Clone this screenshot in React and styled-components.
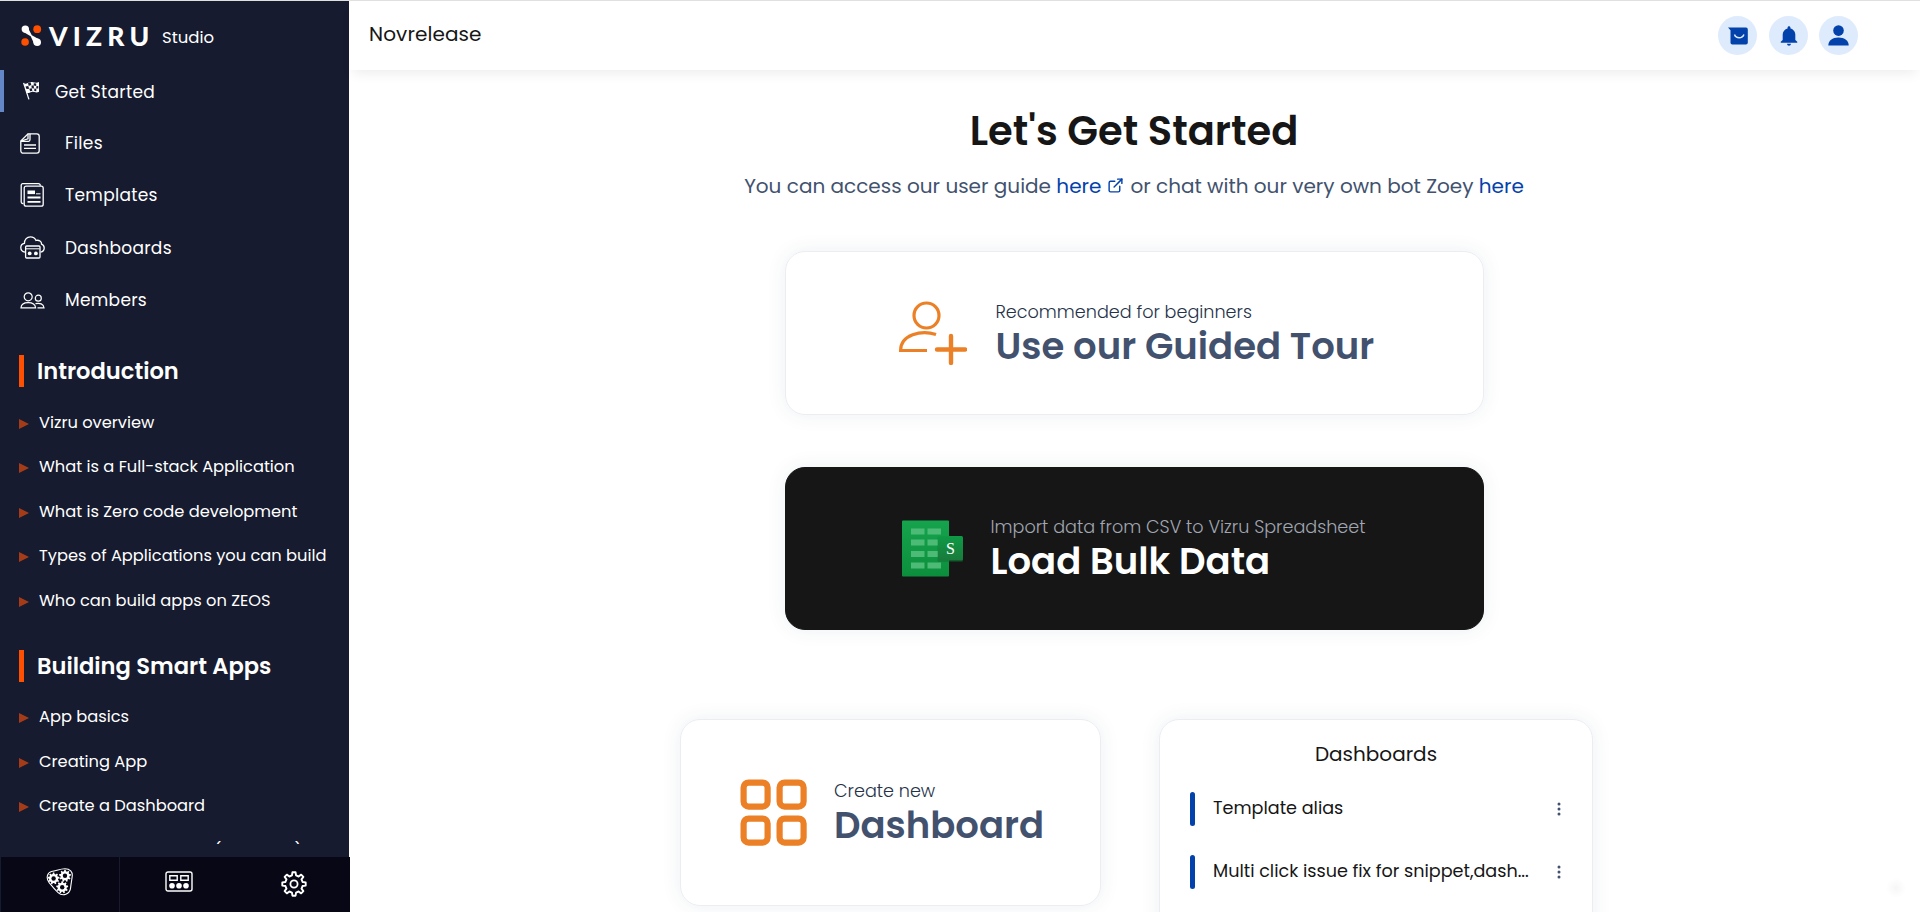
import React from "react";
import styled, { createGlobalStyle, css } from "styled-components";
import { BsThreeDotsVertical } from "react-icons/bs";
import { FiExternalLink } from "react-icons/fi";
import { IoMdNotifications } from "react-icons/io";

const GlobalStyle = createGlobalStyle`
  * {
    box-sizing: border-box;
    margin: 0;
    padding: 0;
  }
  body {
    font-family: Poppins, Inter, "Open Sans", sans-serif;
    background: #fff;
    overflow: hidden;
  }
  ul {
    list-style: none;
  }
  svg {
    display: block;
    flex-shrink: 0;
  }
`;

const Page = styled.div`
  display: flex;
  height: 912px;
  border-top: 1px solid #dfe1df;
  overflow: hidden;
`;

// sidebar
const Sidebar = styled.aside`
  display: flex;
  flex-direction: column;
  width: 349px;
  flex-shrink: 0;
  background: #161b2f;
  color: #fff;
`;
const Brand = styled.div`
  display: flex;
  height: 69px;
  padding: 24px 0 0 21px;
`;
const BrandName = styled.span`
  margin: -3px 0 0 7px;
  width: 106px;
  font-family: Lato, sans-serif;
  font-size: 26.5px;
  font-weight: 900;
  line-height: 28px;
  letter-spacing: 5.2px;
  white-space: nowrap;
`;
const BrandSub = styled.span`
  margin: 1px 0 0 7px;
  font-size: 16.5px;
  line-height: 24px;
`;
const NavItem = styled.li`
  display: flex;
  align-items: center;
  height: ${({ $h }) => $h || 52}px;
  ${({ $active }) =>
    $active &&
    css`
      margin-bottom: 5px;
      border-left: 4px solid #6487c8;
    `}
`;
const NavIcon = styled.span`
  display: flex;
  width: ${({ $active }) => ($active ? 51 : 65)}px;
  padding-left: ${({ $active }) => ($active ? 18 : 20)}px;
`;
const NavText = styled.span`
  padding-top: ${({ $active }) => ($active ? 2 : 0)}px;
  font-size: 17px;
  letter-spacing: 0.3px;
`;
const Topics = styled.div`
  height: 518px;
  padding: 29px 0 0 19px;
  overflow: hidden;
`;
const TopicTitle = styled.h2`
  display: flex;
  align-items: center;
  height: 32px;
  padding-left: 13px;
  border-left: 5px solid #ff4f00;
  font-size: 22.6px;
  font-weight: 600;
`;
const TopicList = styled.ul`
  padding: 13px 0 27px;
`;
const TopicItem = styled.li`
  display: flex;
  align-items: center;
  height: 44.5px;
  font-size: 16.25px;
  white-space: nowrap;
  &::before {
    content: "";
    width: 0;
    margin: 3px 10px 0 0;
    border-left: 10px solid #a63b17;
    border-top: 5px solid transparent;
    border-bottom: 5px solid transparent;
  }
`;
const BottomBar = styled.div`
  display: grid;
  grid-template-columns: 119px 119px 1fr;
  width: 349px;
  height: 55px;
  margin: auto 0 0 1px;
  background: #070716;
`;
const BottomCell = styled.button`
  display: flex;
  justify-content: center;
  padding-top: ${({ $top }) => $top}px;
  border: 0;
  border-right: 1px solid ${({ $line }) => ($line ? "#161b2f" : "transparent")};
  background: none;
  color: #fff;
`;

// main
const Main = styled.main`
  flex: 1;
  display: flex;
  flex-direction: column;
  min-width: 0;
`;
const Header = styled.header`
  display: flex;
  align-items: center;
  justify-content: space-between;
  height: 69px;
  flex-shrink: 0;
  padding: 0 62px 0 20px;
  background: #fff;
  box-shadow: 0 7px 12px -4px rgba(0, 0, 0, 0.08);
`;
const Company = styled.h1`
  padding-bottom: 4px;
  font-size: 20px;
  font-weight: 400;
  letter-spacing: 0.1px;
  color: #161616;
`;
const Actions = styled.div`
  display: flex;
  gap: 11px;
`;
const RoundButton = styled.button`
  display: grid;
  place-items: center;
  width: 39px;
  height: 39px;
  border: 0;
  border-radius: 50%;
  background: #deebfd;
  color: #0341ab;
  &:first-child {
    margin-right: 1px;
  }
`;
const Content = styled.section`
  display: flex;
  flex-direction: column;
  align-items: center;
  padding: 33px 1px 0 0;
`;
const Title = styled.h2`
  font-size: 40px;
  line-height: 56px;
  font-weight: 600;
  color: #161616;
`;
const Intro = styled.p`
  display: flex;
  align-items: center;
  height: 30px;
  margin-top: 12px;
  font-size: 20px;
  color: #42526e;
  white-space: pre;
  a {
    color: #0341ab;
  }
  svg {
    margin: 0 6px 2px 6px;
    color: #0341ab;
  }
`;
const cardBox = css`
  border: 1px solid #ebedf0;
  border-radius: 20px;
  box-shadow: 0 0 20px rgba(30, 70, 90, 0.08);
`;
const BigCard = styled.article`
  ${cardBox}
  display: flex;
  align-items: center;
  width: 699px;
  height: ${({ $dark }) => ($dark ? 163 : 164)}px;
  margin-top: ${({ $top }) => $top}px;
  padding-left: ${({ $left }) => $left}px;
  ${({ $dark }) =>
    $dark &&
    css`
      background: #161616;
      border-color: #161616;
    `}
`;
const CardText = styled.div`
  margin-left: ${({ $left }) => $left}px;
  padding-bottom: ${({ $lift }) => $lift || 0}px;
  white-space: nowrap;
`;
const Hint = styled.p`
  font-size: 17.6px;
  font-weight: 300;
  line-height: 26px;
  color: ${({ $dark }) => ($dark ? "#a1a6b2" : "#253248")};
`;
const CardTitle = styled.h3`
  font-size: 37px;
  font-weight: 600;
  line-height: 42px;
  color: ${({ $dark }) => ($dark ? "#fff" : "#42526e")};
`;
const Columns = styled.div`
  display: flex;
  align-items: flex-start;
  gap: 58px;
  margin: 89px 0 0 5px;
`;
const CreateCard = styled.article`
  ${cardBox}
  display: flex;
  align-items: center;
  width: 421px;
  height: 187px;
  padding-left: 59px;
`;
const ListCard = styled.article`
  ${cardBox}
  width: 434px;
  height: 300px;
  padding: 19px 25px 20px 30px;
`;
const ListTitle = styled.h4`
  padding-right: 5px;
  font-size: 20px;
  font-weight: 400;
  line-height: 30px;
  text-align: center;
  color: #161616;
`;
const ListRow = styled.div`
  display: flex;
  align-items: center;
  height: 63px;
  color: #161616;
  &:first-of-type {
    margin-top: 8px;
  }
  &::before {
    content: "";
    width: 5px;
    height: 34px;
    border-radius: 3px;
    background: #0341ab;
  }
  svg {
    margin-left: auto;
    color: #42526e;
  }
`;
const RowText = styled.span`
  margin: 0 0 1px 18px;
  font-size: 17.6px;
  white-space: nowrap;
`;
// faint chat launcher that floats over the page corner
const ChatDot = styled.div`
  position: absolute;
  right: 14px;
  bottom: 14px;
  width: 20px;
  height: 20px;
  border-radius: 50%;
  background: radial-gradient(#f6f6f6, #fff 70%);
`;

// icons
const LogoIcon = () => (
  <svg width="21" height="22" viewBox="0 0 21 22">
    <path d="M7 3 10.800 10.200 18 14.300 13 18.500 9.700 11.200 2.500 7z" fill="#fff" />
    <circle cx="4.300" cy="4.100" r="3.700" fill="#fff" />
    <circle cx="16.200" cy="17.200" r="3.800" fill="#fff" />
    <circle cx="16.200" cy="4.200" r="3.900" fill="#ff4f00" />
    <circle cx="4.100" cy="17" r="3.800" fill="#ff4f00" />
  </svg>
);
const FlagIcon = () => (
  <svg width="20" height="20" viewBox="0 0 20 20" fill="#fff">
    <path d="m1 2 1.2-.3 5.3 16.5-1.2.3z" />
    <path d="M2 2.500c3 1.300 5-2.200 9-1.300 2 .5 4 .8 6-.2v9.800c-3 1.500-5-.4-7.300.1-2 .4-3 1.700-5 1z" />
    <path
      d="m6 2 2.500-.7.8 2.800-2.600.8zm5.800.3 2.400.3v2.300l-2.500-.4zM3.500 5.500l2.800-.4.8 2.600-2.600.4zM9.400 4.400l2.300.1.3 2.900-2.300-.1zM14.300 5.200l2-.2v2.600h-2zM7.300 7.800l2.400-.5.7 2.400-2.300.6zM12.300 7.600l2 .2v2.400l-2-.2z"
      fill="#161b2f"
    />
  </svg>
);
const FilesIcon = () => (
  <svg width="20" height="21" viewBox="0 0 20 21" fill="none" stroke="#fff" strokeWidth="1.300">
    <path d="M8 .8h8.800a2.400 2.400 0 0 1 2.400 2.400v14.600a2.400 2.400 0 0 1-2.400 2.400H3.200A2.400 2.400 0 0 1 .8 17.800V8z" />
    <path d="M.8 8.400h7.600a2 2 0 0 0 1.600-2V.8M8 .8v5L1 8M4 12h12M4 15.400h12" />
  </svg>
);
const TemplatesIcon = () => (
  <svg width="24" height="24" viewBox="0 0 24 24" fill="none" stroke="#fff" strokeWidth="1.300">
    <path d="M3.500 20.500h-.8a1.600 1.600 0 0 1-1.500-1.600V2.200A1.500 1.500 0 0 1 2.700.7h15.600a2 2 0 0 1 2 2" />
    <rect x="4.200" y="3.200" width="19" height="20" rx="2" />
    <path d="M7.500 14.500h13M7.500 18.800h13" strokeWidth="1.800" />
    <path d="M7.500 9.300h7.500" strokeWidth="3.600" />
    <path d="M16 10.800h4.500" strokeWidth="1" />
  </svg>
);
const CloudBoardIcon = () => (
  <svg width="25" height="23" viewBox="0 0 25 23" fill="none" stroke="#fff" strokeWidth="1.300">
    <path d="M5 16.200C2.300 15.800.8 14 .8 11.600c0-2 1.400-3.800 3.600-4.200C4.400 3.600 7 .8 10.300.8c2.800 0 4.800 1.400 5.700 3.600 3.200-.7 5.600 1 5.600 3.800 1.700.6 2.600 1.900 2.600 3.800 0 2.200-1.400 3.700-3.600 4.100" />
    <rect x="5.600" y="10" width="14.400" height="12" rx="1" />
    <path d="M6 12.800h13.600" strokeWidth="1" />
    <circle cx="9.700" cy="17.400" r="1.900" fill="#fff" stroke="none" />
    <circle cx="15.900" cy="17.400" r="1.900" fill="#fff" stroke="none" />
  </svg>
);
const MembersIcon = () => (
  <svg width="25" height="17" viewBox="0 0 25 17" fill="none" stroke="#fff" strokeWidth="1.200">
    <circle cx="8.200" cy="4.800" r="4" />
    <circle cx="18.300" cy="6.200" r="3" />
    <path d="M1 15.800c.2-3.800 2.800-5.200 7.200-5.200s7 1.400 7.400 5.200zM15.500 11.600c4.500-.9 8 .2 8.500 4.200h-6.500" />
  </svg>
);

// outline of a toothed wheel around the origin
const gearPath = (teeth, outer, inner) => {
  const pts = [];
  for (let i = 0; i < teeth; i++) {
    [-0.3, -0.17, 0.17, 0.3].forEach((off, k) => {
      const r = k === 1 || k === 2 ? outer : inner;
      const a = ((i + off) / teeth) * Math.PI * 2 - Math.PI / 2;
      pts.push(`${(r * Math.cos(a)).toFixed(2)} ${(r * Math.sin(a)).toFixed(2)}`);
    });
  }
  return `M${pts.join("L")}Z`;
};

const GearsIcon = () => (
  <svg width="28" height="28" viewBox="0 0 28 28">
    <path
      d="M5.500 3.500C11 2.500 14 .9 19 .8c5 0 7.800 3.200 7.200 7.600-.6 5-1.200 7-1.600 11.500-.7 6.300-7.800 9-12.500 4.700-3.500-3.300-6-6.300-9-10-3.400-4.500-2-10 2.400-11.100z"
      fill="none"
      stroke="#fff"
      strokeWidth="1.100"
    />
    {[
      [7.6, 10.5],
      [19, 7.8],
      [16.2, 19.3],
    ].map(([x, y]) => (
      <g key={x} transform={`translate(${x} ${y})`}>
        <path d={gearPath(9, 6, 4.6)} fill="#fff" />
        <circle r="2.200" fill="#070716" />
      </g>
    ))}
  </svg>
);
const PanelIcon = () => (
  <svg width="28" height="21" viewBox="0 0 28 21" fill="none" stroke="#fff">
    <rect x="1" y="1" width="26" height="19" rx="2" strokeWidth="1.400" />
    <path d="M4.800 4.800h7.400v4.400H4.800zM15.800 4.800h7.400v4.400h-7.400z" strokeWidth="1.400" />
    <g fill="#fff" stroke="none">
      <circle cx="7" cy="14.700" r="2.800" />
      <circle cx="14" cy="14.700" r="2.800" />
      <circle cx="21" cy="14.700" r="2.800" />
    </g>
  </svg>
);
const SettingsIcon = () => (
  <svg width="26" height="26" viewBox="-13 -13 26 26" fill="none" stroke="#fff">
    <path d={gearPath(8, 11.8, 8.8)} strokeWidth="1.900" strokeLinejoin="round" />
    <circle r="3.600" strokeWidth="1.800" />
  </svg>
);
const InboxIcon = () => (
  <svg width="20" height="18" viewBox="0 0 20 18">
    <path d="M0 .6h18A1.800 1.800 0 0 1 19.800 2.400v13.400A1.800 1.800 0 0 1 18 17.500H4.300a1.800 1.800 0 0 1-1.800-1.800V3.300z" fill="#0341ab" />
    <path d="M6.500 7.500c1.500 4.400 7.800 4.400 9.400 0" fill="none" stroke="#deebfd" strokeWidth="1.500" />
  </svg>
);
const UserIcon = () => (
  <svg width="21" height="21" viewBox="0 0 21 21" fill="currentColor">
    <circle cx="10.500" cy="5.600" r="5.300" />
    <path d="M.3 20.500c0-5 4-8 10.200-8s10.200 3 10.200 8z" />
  </svg>
);
const AddUserIcon = () => (
  <svg width="68" height="64" viewBox="0 0 68 64" fill="none" stroke="#ec8026" strokeWidth="3.200">
    <circle cx="27.500" cy="14.500" r="12.500" />
    <path d="M37 33.500C22 28.500 1.600 34 1.600 49.500H28" />
    <path d="M52 35v27M38 48.500h28" strokeWidth="4.400" strokeLinecap="round" />
  </svg>
);
const SheetIcon = () => (
  <svg width="61" height="57" viewBox="0 0 61 57">
    <defs>
      <linearGradient id="sheet" x2="0" y2="1">
        <stop stopColor="#16a34e" />
        <stop offset="1" stopColor="#0c8f3c" />
      </linearGradient>
      <linearGradient id="badge" x2="0" y2="1">
        <stop stopColor="#0e9a45" />
        <stop offset="1" stopColor="#197a3b" />
      </linearGradient>
    </defs>
    <rect y=".5" width="47" height="56" rx="1" fill="url(#sheet)" />
    {[8.5, 19.5, 31, 42.5].map((y) => (
      <path key={y} d={`M9 ${y}h13.500v6H9zM25.500 ${y}h13.500v6H25.500z`} fill="#4dbb76" />
    ))}
    <rect x="35.500" y="17" width="25.500" height="25" rx="1.500" fill="#0a6b30" opacity=".4" />
    <rect x="36" y="16" width="25" height="24.500" rx="1.500" fill="url(#badge)" />
    <text x="48.500" y="33.500" textAnchor="middle" fill="#fff" fontFamily="Liberation Serif, serif" fontSize="16">
      S
    </text>
  </svg>
);
const GridIcon = () => (
  <svg width="67" height="67" viewBox="0 0 67 67" fill="none" stroke="#ec8026" strokeWidth="6.200">
    <rect x="3.600" y="3.600" width="24" height="24" rx="5" />
    <rect x="39.600" y="3.600" width="24" height="24" rx="5" />
    <rect x="3.600" y="39.600" width="24" height="24" rx="5" />
    <rect x="39.600" y="39.600" width="24" height="24" rx="5" />
  </svg>
);

const navItems = [
  { label: "Files", icon: <FilesIcon />, h: 52 },
  { label: "Templates", icon: <TemplatesIcon />, h: 52 },
  { label: "Dashboards", icon: <CloudBoardIcon />, h: 53 },
  { label: "Members", icon: <MembersIcon />, h: 52 },
];

const topics = [
  {
    title: "Introduction",
    items: [
      "Vizru overview",
      "What is a Full-stack Application",
      "What is Zero code development",
      "Types of Applications you can build",
      "Who can build apps on ZEOS",
    ],
  },
  {
    title: "Building Smart Apps",
    items: [
      "App basics",
      "Creating App",
      "Create a Dashboard",
      "Create a condition in (timelines)",
    ],
  },
];

const App = () => {
  return (
    <>
      <GlobalStyle />
      <Page>
        <Sidebar>
          <Brand>
            <LogoIcon />
            <BrandName>VIZRU</BrandName>
            <BrandSub>Studio</BrandSub>
          </Brand>
          <ul>
            <NavItem $active $h={42}>
              <NavIcon $active>
                <FlagIcon />
              </NavIcon>
              <NavText $active>Get Started</NavText>
            </NavItem>
            {navItems.map((item) => (
              <NavItem key={item.label} $h={item.h}>
                <NavIcon>{item.icon}</NavIcon>
                <NavText>{item.label}</NavText>
              </NavItem>
            ))}
          </ul>
          <Topics>
            {topics.map((topic) => (
              <React.Fragment key={topic.title}>
                <TopicTitle>{topic.title}</TopicTitle>
                <TopicList>
                  {topic.items.map((text) => (
                    <TopicItem key={text}>{text}</TopicItem>
                  ))}
                </TopicList>
              </React.Fragment>
            ))}
          </Topics>
          <BottomBar>
            <BottomCell $top={11} $line>
              <GearsIcon />
            </BottomCell>
            <BottomCell $top={14}>
              <PanelIcon />
            </BottomCell>
            <BottomCell $top={14}>
              <SettingsIcon />
            </BottomCell>
          </BottomBar>
        </Sidebar>
        <Main>
          <Header>
            <Company>Novrelease</Company>
            <Actions>
              <RoundButton>
                <InboxIcon />
              </RoundButton>
              <RoundButton>
                <IoMdNotifications size={24} />
              </RoundButton>
              <RoundButton>
                <UserIcon />
              </RoundButton>
            </Actions>
          </Header>
          <Content>
            <Title>Let's Get Started</Title>
            <Intro>
              You can access our user guide <a>here</a>
              <FiExternalLink size={17} />
              or chat with our very own bot Zoey <a>here</a>
            </Intro>
            <BigCard $top={50} $left={113}>
              <AddUserIcon />
              <CardText $left={29}>
                <Hint>Recommended for beginners</Hint>
                <CardTitle>Use our Guided Tour</CardTitle>
              </CardText>
            </BigCard>
            <BigCard $dark $top={52} $left={116}>
              <SheetIcon />
              <CardText $left={28} $lift={1}>
                <Hint $dark>Import data from CSV to Vizru Spreadsheet</Hint>
                <CardTitle $dark>Load Bulk Data</CardTitle>
              </CardText>
            </BigCard>
            <Columns>
              <CreateCard>
                <GridIcon />
                <CardText $left={27} $lift={2}>
                  <Hint>Create new</Hint>
                  <CardTitle>Dashboard</CardTitle>
                </CardText>
              </CreateCard>
              <ListCard>
                <ListTitle>Dashboards</ListTitle>
                <ListRow>
                  <RowText>Template alias</RowText>
                  <BsThreeDotsVertical size={16} />
                </ListRow>
                <ListRow>
                  <RowText>Multi click issue fix for snippet,dash...</RowText>
                  <BsThreeDotsVertical size={16} />
                </ListRow>
              </ListCard>
            </Columns>
          </Content>
        </Main>
        <ChatDot />
      </Page>
    </>
  );
};

export default App;
